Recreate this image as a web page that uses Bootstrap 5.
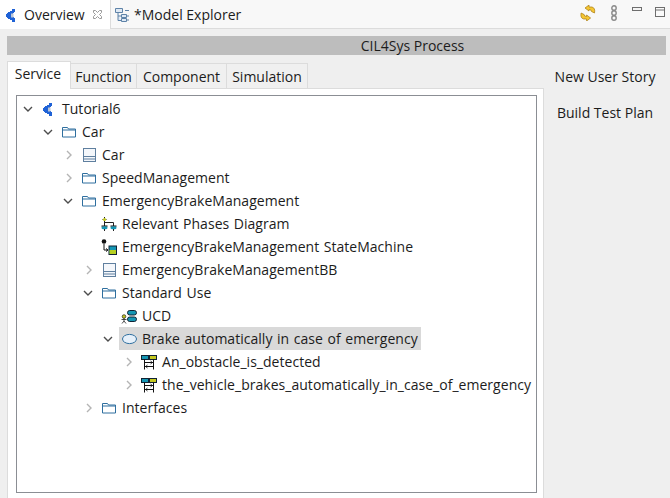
<!DOCTYPE html>
<html lang="en">
<head>
<meta charset="utf-8">
<title>CIL4Sys Process</title>
<link href="https://cdn.jsdelivr.net/npm/bootstrap@5.3.0/dist/css/bootstrap.min.css" rel="stylesheet">
<style>
html,body{height:100%;overflow:hidden}
body{width:670px;height:498px;background:#efefef;font-family:"Open Sans","Noto Sans",sans-serif;font-size:14px;color:#1c1c1c;line-height:20px}
.view-bar{height:29px;background:#f8f8f8;border-bottom:1px solid #dcdcdc}
.view-tab{height:29px}
.view-tab.on{width:111px;padding-left:4px;background:#fff;border-right:1px solid #dcdcdc;margin-bottom:-1px}
.view-tab.on .ic{margin-right:4px}
.view-tab.off{padding-left:3px}
.view-tab.off .ic{margin-right:4px}
.close-x{margin-left:7px}
.win-tools{padding:5px 5px 0 0;height:28px}
.gap-sync{margin-right:14px}.gap-chain{margin-right:14px}.gap-min{margin-right:13px}
.title-band{height:19px;margin:7px 4px 0 7px;padding-left:152px;background:#bdbdbd;line-height:19px;text-align:center}
.body-area{height:443px;padding-left:7px}
.left-col{width:537px;margin-top:6px}
.tabstrip{height:27px}
.ftab{height:25px;padding-top:1px;background:#f0f0f0;border:1px solid #dcdcdc;border-left:0;border-bottom:0;line-height:24px;text-align:center;margin-top:2px}
.ftab.on{height:28px;padding:0 2px 0 0;margin-top:0;background:#fff;border-left:1px solid #dcdcdc;position:relative;z-index:1}
.w1{width:64px}.w2{width:66px}.w3{width:90px}.w4{width:81px}
.folder{height:410px;background:#fff;border:1px solid #dcdcdc;border-bottom:0;padding:6px 6px 0 8px}
.treebox{height:398px;border:1px solid #8b8e94;background:#fff;padding-top:1px;letter-spacing:.03px;word-spacing:.9px}
.trow{height:23px;white-space:nowrap}
.lv0{padding-left:5px}.lv1{padding-left:25px}.lv2{padding-left:45px}.lv3{padding-left:65px}.lv4{padding-left:85px}.lv5{padding-left:105px}
.chev{width:12px;height:12px;flex:none;margin-right:7px}
.ic{width:16px;height:16px;flex:none;margin-right:5px}
.sel{background:#d9d9d9;padding:0 3px 0 2px;margin-left:-2px;height:23px;line-height:23px}
.side-actions{width:122px;padding-top:12px;line-height:20px;text-align:center}
.side-actions div{height:36px}
</style>
</head>
<body>
<svg width="0" height="0" class="d-block position-absolute">
<defs>
<symbol id="open" viewBox="0 0 12 12"><path d="M2 4l4 4 4-4" fill="none" stroke="#4d4d4d" stroke-width="1.4"/></symbol>
<symbol id="closed" viewBox="0 0 12 12"><path d="M5 2l4 4-4 4" fill="none" stroke="#b4b4b4" stroke-width="1.4"/></symbol>
<symbol id="folder" viewBox="0 0 16 16"><path d="M1.500 3.500h5l1 1.500h7v8h-13zM1.500 6h13" fill="#fff" stroke="#2f6f9f"/></symbol>
<symbol id="block" viewBox="0 0 16 16"><rect x="2.500" y="1.500" width="12" height="13" fill="#f4f7fb" stroke="#5f7f9f"/><path d="M2.500 9.500h12M2.500 12h12" stroke="#5f7f9f"/></symbol>
<symbol id="cap" viewBox="0 0 16 16"><path d="M8 2H11V5H10V6H9V10H10V11H11V15H8V13H6V12H4V11H3V10H2V7H3V6H4V5H6V4H8Z" fill="#1f62d6"/><rect x="7" y="6.500" width="2.500" height="4" fill="#bcc6d6"/></symbol>
<symbol id="scen" viewBox="0 0 16 16"><rect x=".5" y="1.500" width="7" height="4" fill="#1596b4" stroke="#123"/><rect x="8.500" y="1.500" width="7" height="4" fill="#c4c820" stroke="#123"/><path d="M3.500 5.500v10M12.500 5.500v10M3.500 8.500h9M3.500 12.500h9" fill="none" stroke="#111"/><path d="M9.500 7l2 1.500-2 1.500M6.500 11l-2 1.500 2 1.500" fill="none" stroke="#111" stroke-width=".8"/></symbol>
</defs>
</svg>

<div class="view-bar d-flex align-items-start">
  <div class="view-tab on d-flex align-items-center">
    <svg class="ic"><use href="#cap"/></svg>
    <span>Overview</span>
    <svg class="close-x" width="11" height="11" viewBox="0 0 11 11"><path d="M1.500 1.500h2L5.500 3.500l2-2h2v2l-2 2 2 2v2h-2l-2-2-2 2h-2v-2l2-2-2-2z" fill="#fff" stroke="#9a9a9a"/></svg>
  </div>
  <div class="view-tab off d-flex align-items-center">
    <svg class="ic" viewBox="0 0 16 16"><path d="M1.500 1.500h7v4h-7zM4 5.500v8h3M4 9h3M7.500 7.500h5v3h-5zM7.500 11.500h5v3h-5z" fill="#dfe9f4" stroke="#5e83a8"/><path d="M11 3.500h4M13 9h2M13 13h2" stroke="#5e83a8"/></svg>
    <span>*Model Explorer</span>
  </div>
  <div class="ms-auto d-flex align-items-start win-tools">
    <svg width="16" height="16" viewBox="0 0 16 16" class="gap-sync"><path d="M5 3L9 0V2H12Q15.500 3 14.500 8L11.500 6.500Q11.500 4.500 9 4.500V6Z" fill="#f5c633" stroke="#a87a10" stroke-width=".7"/><path d="M5 3L9 0V2H12Q15.500 3 14.500 8L11.500 6.500Q11.500 4.500 9 4.500V6Z" transform="rotate(180 7.800 8)" fill="#f5c633" stroke="#a87a10" stroke-width=".7"/></svg>
    <svg width="8" height="16" viewBox="0 0 8 16" class="gap-chain"><circle cx="4" cy="3" r="2.200" fill="none" stroke="#8a8a8a" stroke-width="1.400"/><circle cx="4" cy="8" r="2.200" fill="none" stroke="#8a8a8a" stroke-width="1.400"/><circle cx="4" cy="13" r="2.200" fill="none" stroke="#8a8a8a" stroke-width="1.400"/></svg>
    <svg width="10" height="16" viewBox="0 0 10 16" class="gap-min"><rect x=".5" y="2.500" width="9" height="3" fill="#f4f4f4" stroke="#6e6e6e"/></svg>
    <svg width="10" height="16" viewBox="0 0 10 16"><rect x=".5" y="2.500" width="9" height="9" fill="#fafafa" stroke="#6e6e6e"/><path d="M.5 5h9" stroke="#6e6e6e"/></svg>
  </div>
</div>

<div class="title-band">CIL4Sys Process</div>

<div class="body-area d-flex">
  <div class="left-col">
    <div class="tabstrip d-flex">
      <div class="ftab on w1">Service</div>
      <div class="ftab w2">Function</div>
      <div class="ftab w3">Component</div>
      <div class="ftab w4">Simulation</div>
    </div>
    <div class="folder">
      <div class="treebox">
        <div class="trow d-flex align-items-center lv0"><svg class="chev"><use href="#open"/></svg><svg class="ic"><use href="#cap"/></svg><span>Tutorial6</span></div>
        <div class="trow d-flex align-items-center lv1"><svg class="chev"><use href="#open"/></svg><svg class="ic"><use href="#folder"/></svg><span>Car</span></div>
        <div class="trow d-flex align-items-center lv2"><svg class="chev"><use href="#closed"/></svg><svg class="ic"><use href="#block"/></svg><span>Car</span></div>
        <div class="trow d-flex align-items-center lv2"><svg class="chev"><use href="#closed"/></svg><svg class="ic"><use href="#folder"/></svg><span>SpeedManagement</span></div>
        <div class="trow d-flex align-items-center lv2"><svg class="chev"><use href="#open"/></svg><svg class="ic"><use href="#folder"/></svg><span>EmergencyBrakeManagement</span></div>
        <div class="trow d-flex align-items-center lv3"><span class="chev"></span><svg class="ic" viewBox="0 0 16 16"><path d="M3.500 4v6M3.500 6.500h9V10M1.500 3.500h4M3.500 1v5" fill="none" stroke="#222"/><circle cx="3.500" cy="3.500" r="1.600" fill="#c4c820"/><rect x=".5" y="9.500" width="6" height="1.200" fill="#111"/><rect x="9.500" y="9.500" width="6" height="1.200" fill="#111"/><ellipse cx="3.500" cy="11.800" rx="3" ry="1.500" fill="#1596b4"/><ellipse cx="12.500" cy="11.800" rx="3" ry="1.500" fill="#1596b4"/><path d="M3.500 13v2M12.500 13v2" stroke="#222"/></svg><span>Relevant Phases Diagram</span></div>
        <div class="trow d-flex align-items-center lv3"><span class="chev"></span><svg class="ic" viewBox="0 0 16 16"><circle cx="3" cy="2.500" r="2.300" fill="#111"/><path d="M3 5v6h3.500M5 9.500l2 1.500-2 1.500" fill="none" stroke="#111"/><rect x="8" y="7" width="7.500" height="8.500" fill="#1596b4" stroke="#123"/><rect x="8.500" y="11" width="6.500" height="4" fill="#b6d022"/></svg><span>EmergencyBrakeManagement StateMachine</span></div>
        <div class="trow d-flex align-items-center lv3"><svg class="chev"><use href="#closed"/></svg><svg class="ic"><use href="#block"/></svg><span>EmergencyBrakeManagementBB</span></div>
        <div class="trow d-flex align-items-center lv3"><svg class="chev"><use href="#open"/></svg><svg class="ic"><use href="#folder"/></svg><span>Standard Use</span></div>
        <div class="trow d-flex align-items-center lv4"><span class="chev"></span><svg class="ic" viewBox="0 0 16 16"><circle cx="3" cy="8.500" r="1.800" fill="#c4c820" stroke="#222" stroke-width=".7"/><path d="M3 10v3M.5 11.500h5M3 13l-2 2.500M3 13l2 2.500" fill="none" stroke="#222" stroke-width=".8"/><rect x="6.500" y="2.500" width="9" height="4.500" rx="2.200" fill="#1596b4" stroke="#123"/><rect x="6.500" y="9" width="9" height="4.500" rx="2.200" fill="#1596b4" stroke="#123"/></svg><span>UCD</span></div>
        <div class="trow d-flex align-items-center lv4"><svg class="chev"><use href="#open"/></svg><div class="sel d-flex align-items-center"><svg class="ic" viewBox="0 0 16 16"><ellipse cx="8.500" cy="8" rx="7" ry="4.600" fill="#e6f0fa" stroke="#2f6f9f"/></svg><span>Brake automatically in case of emergency</span></div></div>
        <div class="trow d-flex align-items-center lv5"><svg class="chev"><use href="#closed"/></svg><svg class="ic"><use href="#scen"/></svg><span>An_obstacle_is_detected</span></div>
        <div class="trow d-flex align-items-center lv5"><svg class="chev"><use href="#closed"/></svg><svg class="ic"><use href="#scen"/></svg><span>the_vehicle_brakes_automatically_in_case_of_emergency</span></div>
        <div class="trow d-flex align-items-center lv3"><svg class="chev"><use href="#closed"/></svg><svg class="ic"><use href="#folder"/></svg><span>Interfaces</span></div>
      </div>
    </div>
  </div>
  <div class="side-actions">
    <div>New User Story</div>
    <div>Build Test Plan</div>
  </div>
</div>
</body>
</html>
